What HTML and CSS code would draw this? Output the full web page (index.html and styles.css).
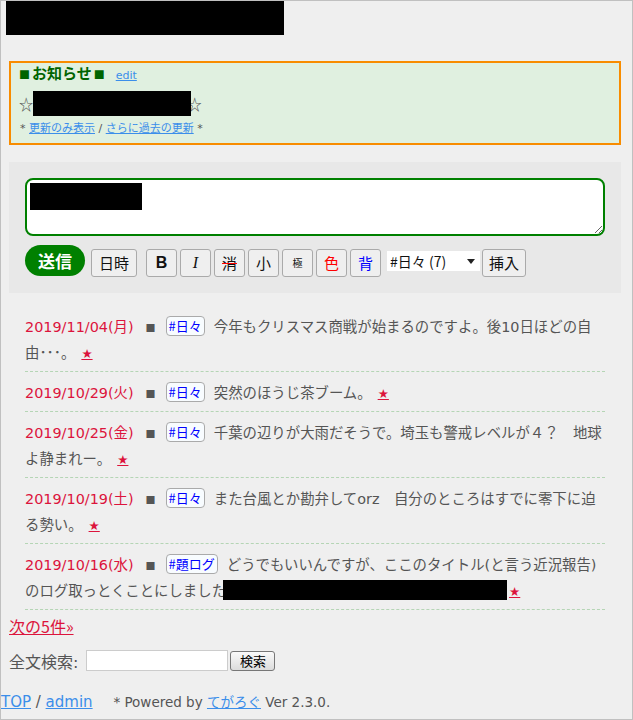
FILE: index.html
```html
<!DOCTYPE html>
<html lang="ja">
<head>
    <meta charset="UTF-8">
    <meta name="viewport" content="width=device-width, initial-scale=1.0">
    <title>近況報告</title>
    <link rel="stylesheet" href="styles.css">
</head>
<body>
    <div class="frame">
        <div class="site-title"></div>

        <div class="main">
            <div class="notice">
                <div class="notice-title"><span class="sq">■</span>お知らせ<span class="sq">■</span><a href="#" class="edit">edit</a></div>
                <div class="notice-body">☆<span class="redact notice-redact"></span><span class="star-end">☆</span></div>
                <div class="notice-links">* <a href="#">更新のみ表示</a> / <a href="#">さらに過去の更新</a> *</div>
            </div>

            <form class="post-form">
                <div class="text-wrap">
                    <textarea class="post-text"></textarea>
                    <span class="redact text-redact"></span>
                </div>
                <div class="tools">
                    <button type="button" class="send">送信</button>
                    <button type="button" class="tool date-btn">日時</button>
                    <div class="deco">
                        <button type="button" class="tool t-bold">B</button>
                        <button type="button" class="tool t-italic">I</button>
                        <button type="button" class="tool t-del">消</button>
                        <button type="button" class="tool">小</button>
                        <button type="button" class="tool t-tiny">極</button>
                        <button type="button" class="tool t-red">色</button>
                        <button type="button" class="tool t-blue">背</button>
                    </div>
                    <div class="tag-select">
                        <select>
                            <option>#日々 (7)</option>
                            <option>#題ログ (1)</option>
                        </select>
                    </div>
                    <button type="button" class="tool insert">挿入</button>
                </div>
            </form>

            <div class="entries">
                <div class="entry">
                    <span class="date">2019/11/04(月)</span><span class="mark">■</span><a href="#" class="tag">#日々</a><span class="text">今年もクリスマス商戦が始まるのですよ。後10日ほどの自由･･･。</span><a href="#" class="star">★</a>
                </div>
                <div class="entry">
                    <span class="date">2019/10/29(火)</span><span class="mark">■</span><a href="#" class="tag">#日々</a><span class="text">突然のほうじ茶ブーム。</span><a href="#" class="star">★</a>
                </div>
                <div class="entry">
                    <span class="date">2019/10/25(金)</span><span class="mark">■</span><a href="#" class="tag">#日々</a><span class="text">千葉の辺りが大雨だそうで。埼玉も警戒レベルが４？　地球よ静まれー。</span><a href="#" class="star">★</a>
                </div>
                <div class="entry">
                    <span class="date">2019/10/19(土)</span><span class="mark">■</span><a href="#" class="tag">#日々</a><span class="text">また台風とか勘弁してorz　自分のところはすでに零下に迫る勢い。</span><a href="#" class="star">★</a>
                </div>
                <div class="entry">
                    <span class="date">2019/10/16(水)</span><span class="mark">■</span><a href="#" class="tag">#題ログ</a><span class="text">どうでもいいんですが、ここのタイトル(と言う近況報告)のログ取っとくことにしました<span class="redact entry-redact"></span></span><a href="#" class="star star-tight">★</a>
                </div>
            </div>

            <div class="next"><a href="#">次の5件»</a></div>

            <form class="search">
                <label>全文検索:</label>
                <input type="text" class="search-box">
                <button type="button" class="search-btn">検索</button>
            </form>
        </div>

        <div class="footer">
            <a href="#">TOP</a> / <a href="#">admin</a>
            <span class="powered">* Powered by <a href="#">てがろぐ</a> Ver 2.3.0.</span>
        </div>
    </div>
</body>
</html>
```

FILE: styles.css
```css
html, body {
    margin: 0;
    padding: 0;
}
body {
    font-family: "DejaVu Sans", "Noto Sans CJK JP", sans-serif;
    color: #555;
    background-color: #efefef;
}
a {
    color: #3b8eea;
}
.frame {
    height: 720px;
    border: 1px solid #c0c0c0;
    box-sizing: border-box;
    overflow: hidden;
}
.site-title {
    width: 278px;
    height: 35px;
    margin: -1px 0 0 5px;
    background-color: #000;
}
.redact {
    display: inline-block;
    background-color: #000;
}
.main {
    width: 612px;
    margin-left: 8px;
}

/* notice */
.notice {
    margin-top: 26px;
    border: 2px solid #f88c00;
    background-color: #e0f0e0;
    padding: 0 6px 6px;
}
.notice-title {
    font-family: "Noto Sans CJK JP", sans-serif;
    font-size: 15px;
    font-weight: bold;
    line-height: 20px;
    color: #006400;
}
.sq {
    font-size: 11px;
    margin: 0 2px;
}
.edit {
    font-family: "DejaVu Sans", sans-serif;
    font-size: 11px;
    font-weight: normal;
    margin-left: 9px;
}
.notice-body {
    margin: 6px 0 0 2px;
    font-size: 14.4px;
    line-height: 24px;
    height: 24px;
}
.notice-body, .star-end {
    font-family: "Noto Sans CJK JP", sans-serif;
}
.notice-redact {
    width: 158px;
    height: 25px;
    vertical-align: top;
    margin-top: -1px;
    position: relative;
    z-index: 1;
}
.star-end {
    margin-left: -4px;
}
.notice-links {
    margin: 5px 0 0 3px;
    font-size: 11px;
    line-height: 16px;
}

/* post form */
.post-form {
    margin: 17px 0 0;
    padding: 16px;
    background-color: #e8e8e8;
}
.text-wrap {
    position: relative;
}
.post-text {
    display: block;
    width: 580px;
    height: 58px;
    box-sizing: border-box;
    border: 2px solid #008000;
    border-radius: 8px;
    background-color: #fff;
    margin: 0;
    padding: 4px;
    font-size: 14px;
}
.text-redact {
    position: absolute;
    left: 5px;
    top: 5px;
    width: 112px;
    height: 27px;
}
.tools {
    display: flex;
    align-items: flex-end;
    margin-top: 9px;
}
button {
    font-family: "Noto Sans CJK JP", sans-serif;
}
.send {
    width: 60px;
    height: 31px;
    margin-bottom: 1px;
    border: none;
    border-radius: 16px;
    background-color: #008000;
    color: #fff;
    font-size: 17px;
    font-weight: bold;
    padding: 0;
}
.tool {
    height: 28px;
    border: 1px solid #aaa;
    border-radius: 3px;
    background-color: #efefef;
    color: #111;
    font-size: 15px;
    padding: 0;
    line-height: 26px;
}
.date-btn {
    width: 46px;
    margin-left: 6px;
}
.deco {
    display: flex;
    gap: 3px;
    margin-left: 9px;
}
.deco .tool {
    width: 31px;
}
.t-bold {
    font-family: "Liberation Sans", sans-serif;
    font-weight: bold;
    font-size: 16px;
}
.t-italic {
    font-family: "Liberation Serif", serif;
    font-style: italic;
    font-size: 16px;
}
.t-del {
    text-decoration: line-through;
    text-decoration-color: #f00;
}
.t-tiny {
    font-size: 10px;
}
.t-red {
    color: #f00;
}
.t-blue {
    color: #00f;
}
.tag-select {
    position: relative;
    margin: 0 0 6px 6px;
}
.tag-select select {
    appearance: none;
    -webkit-appearance: none;
    width: 93px;
    height: 20px;
    border: none;
    border-radius: 0;
    background-color: #fff;
    padding: 0 0 0 3px;
    font-family: "Noto Sans CJK JP", sans-serif;
    font-size: 14px;
    color: #111;
    display: block;
}
.tag-select::after {
    content: "";
    position: absolute;
    right: 5px;
    top: 8px;
    border-left: 4px solid transparent;
    border-right: 4px solid transparent;
    border-top: 5px solid #222;
}
.insert {
    width: 44px;
    margin-left: 2px;
}

/* entries */
.entries {
    margin: 13px 16px 0;
}
.entry {
    padding: 8px 0 5px;
    border-bottom: 1px dashed #b5d5b5;
    font-size: 14.4px;
    line-height: 26px;
}
.date {
    color: #dc143c;
}
.mark {
    font-family: "Noto Sans CJK JP", sans-serif;
    font-size: 10px;
    line-height: 1;
    color: #555;
    margin: 0 10px 0 12px;
}
.tag {
    display: inline-block;
    font-family: "Noto Sans CJK JP", sans-serif;
    font-size: 13px;
    line-height: 18px;
    padding: 0 2px;
    border: 1px solid #aaa;
    border-radius: 4px;
    background-color: #f8fcff;
    color: #00f;
    text-decoration: none;
    margin-right: 9px;
    vertical-align: 1px;
}
.star {
    color: #dc143c;
    font-size: 12.5px;
    line-height: 1;
    margin-left: 6px;
}
.star-tight {
    margin-left: 2px;
}
.entry-redact {
    width: 284px;
    height: 20px;
    margin-left: -3px;
    vertical-align: -4px;
}

/* bottom */
.next {
    margin-top: 5px;
    font-family: "Noto Sans CJK JP", sans-serif;
    font-size: 16px;
    line-height: 22px;
}
.next a {
    color: #dc143c;
}
.search {
    display: flex;
    align-items: center;
    margin: 12px 0 0;
    height: 23px;
}
.search label {
    font-size: 16px;
    margin-right: 8px;
}
.search-box {
    width: 142px;
    height: 21px;
    box-sizing: border-box;
    border: 1px solid #ccc;
    background-color: #fff;
    margin: 0;
}
.search-btn {
    width: 45px;
    height: 20px;
    margin-left: 2px;
    border: 1px solid #777;
    border-radius: 3px;
    background: linear-gradient(#fafafa, #dcdcdc);
    font-size: 13px;
    line-height: 16px;
    padding: 0;
    color: #000;
}
.footer {
    margin-top: 19px;
    font-size: 15px;
    line-height: 22px;
}
.powered {
    font-size: 13.5px;
    margin-left: 16px;
}
```
